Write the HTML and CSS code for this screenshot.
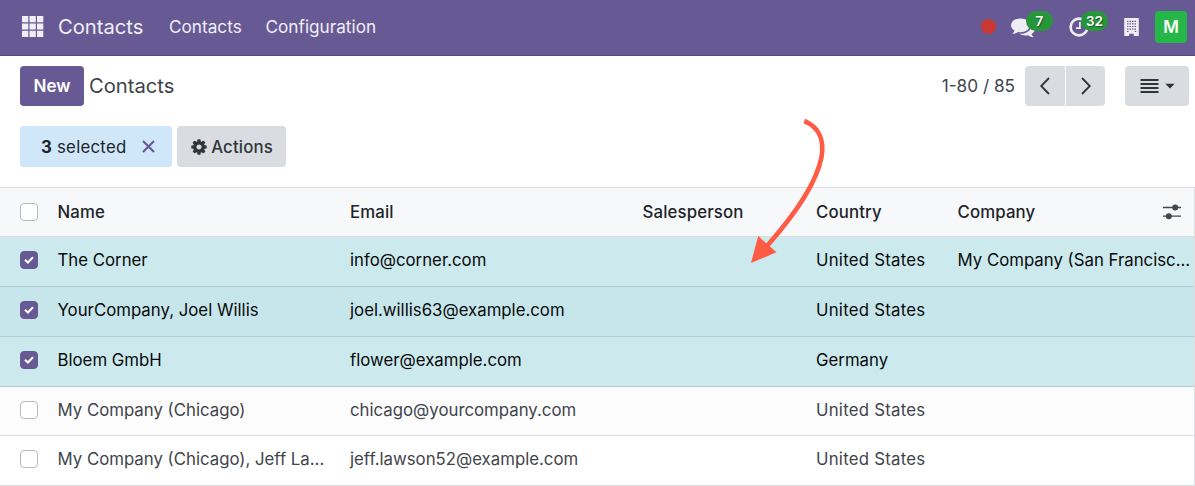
FILE: index.html
```html
<!DOCTYPE html>
<html lang="en">
<head>
<meta charset="utf-8">
<title>Contacts</title>
<link rel="stylesheet" href="styles.css">
</head>
<body>
<header class="navbar">
  <svg class="apps" width="22" height="22" viewBox="0 0 22 22"><path d="M0 0h6.300v6.300H0zM7.500 0h6.300v6.300H7.500zM15 0h6.300v6.300H15zM0 7.500h6.300v6H0zM7.500 7.500h6.300v6H7.500zM15 7.500h6.300v6H15zM0 14.800h6.300v6.200H0zM7.500 14.800h6.300v6.200H7.500zM15 14.800h6.300v6.200H15z"/></svg>
  <span class="brand"><span>Contacts</span></span>
  <nav class="menu"><span>Contacts</span><span class="menu-config">Configuration</span></nav>
  <div class="systray">
    <span class="record"></span>
    <span class="tray messages">
      <svg width="24" height="24" viewBox="0 0 1792 1792"><path d="M1408 768q0 139-94 257t-256.500 186.500-353.500 68.500q-86 0-176-16-124 88-278 128-36 9-86 16h-3q-11 0-20.500-8t-11.500-21q-1-3-1-6.500t.5-6.500 2-6l2.500-5 3.500-5.500 4-5 4.500-5 4-4.500q5-6 23-25t26-29.500 22.500-29 25-38.500 20.500-44q-124-72-195-177t-71-224q0-139 94-257t256.500-186.500 353.500-68.500 353.500 68.500 256.500 186.500 94 257zm384 256q0 120-71 224.500t-195 176.500q10 24 20.500 44t25 38.500 22.500 29 26 29.500 23 25q1 1 4 4.500t4.500 5 4 5 3.500 5.500l2.500 5 2 6 .5 6.500-1 6.500q-3 14-13 22t-22 7q-50-7-86-16-154-40-278-128-90 16-176 16-271 0-472-132 58 4 88 4 161 0 309-45t264-129q125-92 192-212t67-254q0-77-23-152 129 71 204 178t75 230z"/></svg>
      <span class="badge">7</span>
    </span>
    <span class="tray activities">
      <svg width="20" height="20" viewBox="0 0 20 20"><circle cx="10" cy="10" r="8.400" fill="none" stroke="currentColor" stroke-width="2.600"/><path d="M10.900 5v6.200H7.100" fill="none" stroke="currentColor" stroke-width="1.700"/></svg>
      <span class="badge">32</span>
    </span>
    <svg class="building" width="15" height="18" viewBox="0 0 15 18"><path fill-rule="evenodd" d="M.8 0h13.400q.6 0 .6.600v16.800q0 .6-.6.600H9.800v-2.300H5.200V18H.8q-.6 0-.6-.6V.6Q.2 0 .8 0z"/><path class="windows" d="M3 3.300h9.500M3 5.900h9.500M3 8.500h9.500M3 11.100h9.500M3 13.500h1.500M10.700 13.500h1.500"/></svg>
    <span class="avatar">M</span>
  </div>
</header>
<main>
  <div class="control-row">
    <button class="btn primary"><span>New</span></button>
    <span class="title">Contacts</span>
    <span class="pager">1-80 / 85</span>
    <div class="pager-buttons">
      <button class="btn"><svg width="12" height="20" viewBox="0 0 12 20"><path d="M10 2L2.200 10l7.800 8"/></svg></button>
      <button class="btn"><svg width="12" height="20" viewBox="0 0 12 20"><path d="M2 2l7.800 8L2 18"/></svg></button>
    </div>
    <button class="btn view"><svg width="36" height="16" viewBox="0 0 36 16"><path d="M1.500 1h18v2h-18zM1.500 5h18v2h-18zM1.500 9h18v2h-18zM1.500 13h18v2h-18zM26.300 5.800h9.400L31 10.600z"/></svg></button>
  </div>
  <div class="selection-row">
    <div class="selected"><b>3</b><span>selected</span><svg width="13" height="13" viewBox="0 0 13 13"><path d="M1 1l11 11M12 1L1 12"/></svg></div>
    <button class="btn actions"><svg width="18" height="18" viewBox="0 0 1792 1792"><path d="M1152 896q0-106-75-181t-181-75-181 75-75 181 75 181 181 75 181-75 75-181zm512-109v222q0 12-8 23t-20 13l-185 28q-19 54-39 91 35 50 107 138 10 12 10 25t-9 23q-27 37-99 108t-94 71q-12 0-26-9l-138-108q-44 23-91 38-16 136-29 186-7 28-36 28h-222q-14 0-24.500-8.500t-11.500-21.500l-28-184q-49-16-90-37l-141 107q-10 9-25 9-14 0-25-11-126-114-165-168-7-10-7-23 0-12 8-23 15-21 51-66.500t54-70.500q-27-50-41-99l-183-27q-13-2-21-12.500t-8-23.500v-222q0-12 8-23t19-13l186-28q14-46 39-92-40-57-107-138-10-12-10-24 0-10 9-23 26-36 98.500-107.500t94.500-71.500q13 0 26 10l138 107q44-23 91-38 16-136 29-186 7-28 36-28h222q14 0 24.500 8.500t11.500 21.500l28 184q49 16 90 37l142-107q9-9 24-9 13 0 25 10 129 119 165 170 7 8 7 22 0 12-8 23-15 21-51 66.500t-54 70.500q26 50 41 98l183 28q13 2 21 12.500t8 23.500z"/></svg><span>Actions</span></button>
  </div>
  <section class="list">
    <div class="row head"><i class="check"></i><span>Name</span><span>Email</span><span>Salesperson</span><span>Country</span><span>Company</span>
      <svg class="sliders" width="18" height="16" viewBox="0 0 18 16"><path d="M0 3.500h18M0 12.200h18"/><circle cx="12.200" cy="3.500" r="3"/><circle cx="5.800" cy="12.200" r="3"/></svg></div>
    <div class="row on"><i class="check"><svg width="10" height="8" viewBox="0 0 10 8"><path d="M1 3.800l2.900 2.700L9 1.300"/></svg></i><span>The Corner</span><span>info@corner.com</span><span></span><span class="country">United States</span><span class="wide">My Company (San Francisc...</span></div>
    <div class="row on alt"><i class="check"><svg width="10" height="8" viewBox="0 0 10 8"><path d="M1 3.800l2.900 2.700L9 1.300"/></svg></i><span>YourCompany, Joel Willis</span><span>joel.willis63@example.com</span><span></span><span class="country">United States</span></div>
    <div class="row on"><i class="check"><svg width="10" height="8" viewBox="0 0 10 8"><path d="M1 3.800l2.900 2.700L9 1.300"/></svg></i><span>Bloem GmbH</span><span>flower@example.com</span><span></span><span>Germany</span></div>
    <div class="row stripe"><i class="check"></i><span>My Company (Chicago)</span><span>chicago@yourcompany.com</span><span></span><span class="country">United States</span></div>
    <div class="row last"><i class="check"></i><span>My Company (Chicago), Jeff La...</span><span>jeff.lawson52@example.com</span><span></span><span class="country">United States</span></div>
  </section>
</main>
<svg class="arrow" width="90" height="155" viewBox="0 0 90 155"><path d="M59.300 7C74 13 79.500 26 76.500 43C72 67 52 98 22 132" fill="none" stroke="#ff5b45" stroke-width="4.600"/><path d="M6 149L13.200 122L31.500 138.300z" fill="#ff5b45"/></svg>
</body>
</html>
```
FILE: styles.css
```css
* { box-sizing: border-box; }
body {
  margin: 0;
  height: 486px;
  overflow: hidden;
  background: #fff;
  color: #3f444b;
  font: 16.8px/24px Inter, "Liberation Sans", sans-serif;
}
svg { display: block; flex: none; }
.navbar {
  display: flex;
  align-items: center;
  height: 56px;
  padding: 0 8px 2px 22px;
  background: #675a94;
  border-bottom: 1px solid #544779;
  color: #f0eef5;
}
.apps { fill: currentColor; }
.brand { width: 111px; margin-left: 14px; font-size: 20.200px; }
.menu { display: flex; font-size: 17.200px; }
.menu span { width: 96.500px; white-space: nowrap; }
.systray { display: flex; align-items: center; margin-left: auto; }
.record { width: 15px; height: 15px; border-radius: 50%; background: #cb3833; }
.tray { position: relative; }
.tray svg { fill: currentColor; }
.messages { margin-left: 15px; }
.activities { margin-left: 34px; }
.badge {
  position: absolute;
  left: 15px;
  top: -4px;
  width: 27px;
  height: 20px;
  border-radius: 10px;
  background: #27963b;
  color: #fff;
  font-size: 13.500px;
  font-weight: 600;
  line-height: 20px;
  text-align: center;
  text-shadow: 1px 1px 1px #0006;
}
.activities .badge { left: 12px; top: -6px; }
.building { margin-left: 35px; fill: currentColor; }
.windows { stroke: #675a94; stroke-width: 1.200; stroke-dasharray: 1.500 1; }
.avatar {
  width: 32px;
  height: 32px;
  margin-left: 16px;
  border-radius: 4px;
  background: #25b748;
  color: #fff;
  font-size: 17px;
  font-weight: 600;
  line-height: 32px;
  text-align: center;
}
.control-row { display: flex; align-items: center; height: 60px; padding: 0 6px 0 20px; }
.btn {
  display: flex;
  align-items: center;
  justify-content: center;
  width: 40px;
  height: 40px;
  padding: 0;
  border: 0;
  border-radius: 4px;
  background: #d9dde1;
  color: #30353b;
  font: inherit;
}
.primary { width: 64px; background: #675a94; color: #fff; font-size: 17px; font-weight: 600; }
.title { margin-left: 5px; font-size: 20.200px; }
.pager { margin-left: auto; font-size: 17.200px; }
.pager-buttons { display: flex; gap: 1px; margin: 0 20px 0 10px; }
.pager-buttons .btn { width: 40px; }
.pager-buttons .btn:first-child { border-radius: 4px 0 0 4px; }
.pager-buttons .btn:last-child { width: 39px; border-radius: 0 4px 4px 0; }
.pager-buttons svg { fill: none; stroke: #30353b; stroke-width: 1.800; }
.view { width: 64px; }
.view svg { fill: #30353b; }
.selection-row { display: flex; gap: 5px; height: 71px; padding: 10px 20px; }
.selected {
  display: flex;
  align-items: center;
  width: 152px;
  height: 41px;
  padding: 0 17px 0 21px;
  border-radius: 3px;
  background: #d0e7f9;
  color: #20242a;
}
.selected b { width: 16px; font-weight: 700; }
.selected span { letter-spacing: .25px; }
.selected svg { margin-left: auto; fill: none; stroke: #675a94; stroke-width: 2.200; }
.actions { width: 109px; height: 41px; gap: 3px; font-weight: 500; }
.actions span { letter-spacing: .15px; }
.actions svg { fill: #30353b; }
.list { border-top: 1px solid #dadce0; border-right: 1px solid #dcdee1; }
.row {
  display: grid;
  grid-template-columns: 37.500px 292.500px 292.500px 173.500px 141.500px 205px 1fr;
  align-items: center;
  height: 50px;
  padding: 0 0 3px 20px;
  border-bottom: 1px solid #dadce0;
  white-space: nowrap;
}
.head { height: 49px; padding-bottom: 0; background: #f7f8fa; color: #20242a; font-weight: 500; letter-spacing: .13px; }
.on { background: #cce9ee; border-color: #adced4; color: #080a0b; }
.alt { background: #c7e6eb; }
.stripe { height: 49px; padding-bottom: 2px; background: #fcfcfc; }
.last { padding-bottom: 3px; }
.country { letter-spacing: .23px; }
.wide { grid-column: 6 / 8; }
.check {
  display: grid;
  place-items: center;
  width: 18px;
  height: 18px;
  border: 1px solid #b6bac0;
  border-radius: 4px;
  background: #fff;
}
.on .check { border-color: #675a94; background: #675a94; }
.check svg { fill: none; stroke: #fff; stroke-width: 2; }
.sliders { fill: #414950; stroke: #414950; stroke-width: 1.300; }
.sliders circle { stroke: none; }
.arrow { position: absolute; left: 745px; top: 114px; }
```
